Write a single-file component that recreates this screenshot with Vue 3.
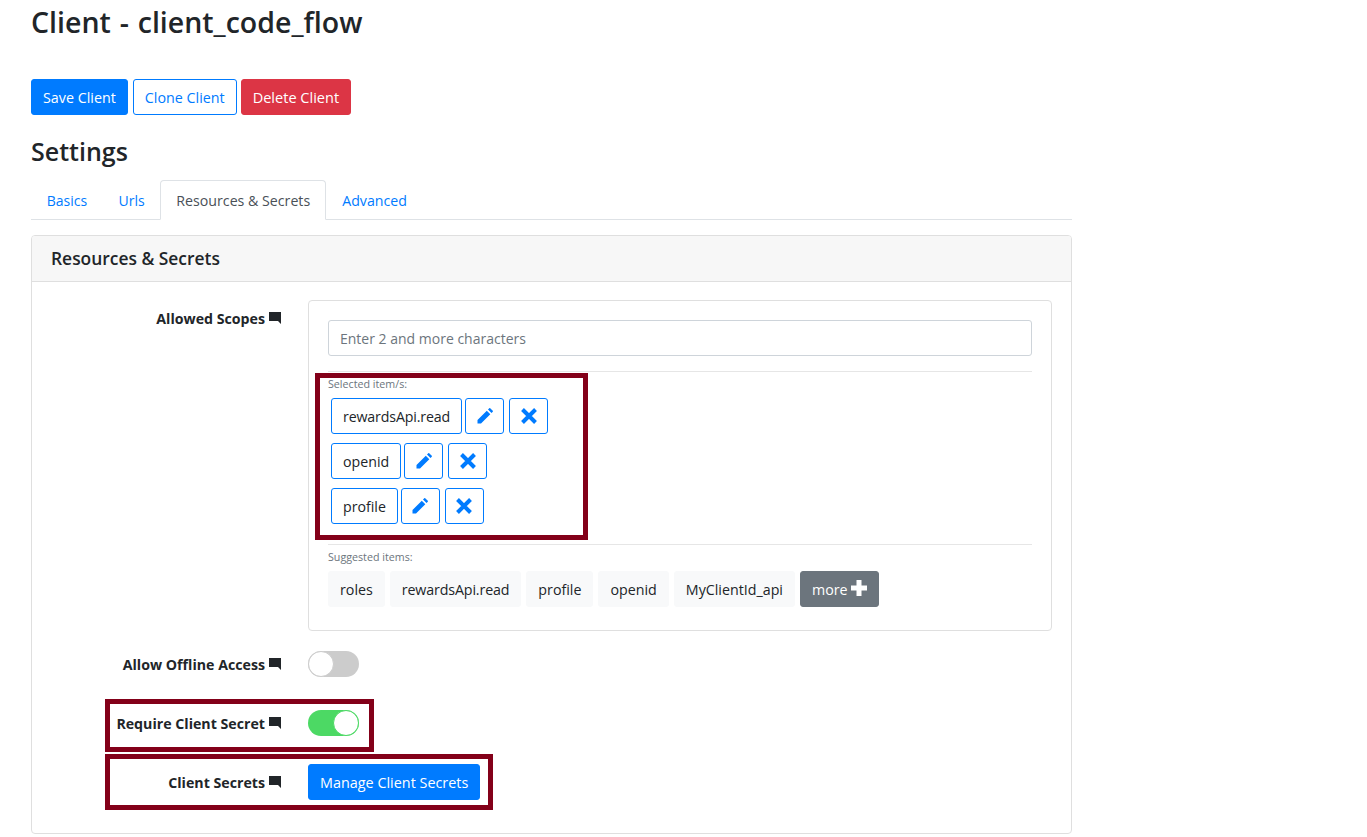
<script setup>
const selected = ['rewardsApi.read', 'openid', 'profile']
const suggested = ['roles', 'rewardsApi.read', 'profile', 'openid', 'MyClientId_api']
const tightIf = (s) => (s === 'rewardsApi.read' ? 'tight' : '')
</script>

<template>
  <div class="page">
    <h1 class="title">Client - client_code_flow</h1>
    <div class="actions">
      <button class="btn primary">Save Client</button>
      <button class="btn outline">Clone Client</button>
      <button class="btn danger">Delete Client</button>
    </div>
    <h3 class="settings">Settings</h3>
    <div class="tabs">
      <a class="tab short">Basics</a>
      <a class="tab short">Urls</a>
      <a class="tab active">Resources &amp; Secrets</a>
      <a class="tab">Advanced</a>
    </div>
    <section class="card">
      <h5 class="card-head">Resources &amp; Secrets</h5>
      <div class="card-body">
        <div class="row scopes">
          <label class="label">Allowed Scopes
            <svg class="cmt" viewBox="0 0 12 12"><path d="M0 0H12V12L9 9H0Z" /></svg>
          </label>
          <div class="box">
            <input class="input" placeholder="Enter 2 and more characters" />
            <div class="sep"></div>
            <div class="selected">
              <div class="mark mark-sel"></div>
              <small class="hint">Selected item/s:</small>
              <div v-for="s in selected" :key="s" class="sel-row">
                <button class="btn outline ink" :class="tightIf(s)">{{ s }}</button>
                <button class="btn outline icon first">
                  <svg viewBox="0 0 16 16" width="16" height="16"><path d="M0.5 15.5V12L9.8 2.7L13.3 6.2L4 15.5ZM11 1.5L12.3 0.2C12.6 0 13 0 13.2 0.2L15.8 2.8C16 3 16 3.4 15.8 3.7L14.5 5Z" /></svg>
                </button>
                <button class="btn outline icon">
                  <svg viewBox="0 0 16 16" width="16" height="16"><path d="M1.5 1.5L14.5 14.5M14.5 1.5L1.5 14.5" class="x" /></svg>
                </button>
              </div>
            </div>
            <div class="sep sep2"></div>
            <small class="hint hint2">Suggested items:</small>
            <div class="sug">
              <button v-for="s in suggested" :key="s" class="btn light" :class="tightIf(s)">{{ s }}</button>
              <button class="btn secondary more">more<svg viewBox="0 0 16 16" width="16" height="16" class="plus"><path d="M5.5 0H10.5V5.5H16V10.5H10.5V16H5.5V10.5H0V5.5H5.5Z" /></svg></button>
            </div>
          </div>
        </div>
        <div class="row r-offline">
          <label class="label">Allow Offline Access
            <svg class="cmt" viewBox="0 0 12 12"><path d="M0 0H12V12L9 9H0Z" /></svg>
          </label>
          <span class="toggle"><span class="knob"></span></span>
        </div>
        <div class="row r-secret">
          <div class="mark mark-req"></div>
          <label class="label">Require Client Secret
            <svg class="cmt" viewBox="0 0 12 12"><path d="M0 0H12V12L9 9H0Z" /></svg>
          </label>
          <span class="toggle on"><span class="knob"></span></span>
        </div>
        <div class="row r-manage">
          <div class="mark mark-man"></div>
          <label class="label">Client Secrets
            <svg class="cmt" viewBox="0 0 12 12"><path d="M0 0H12V12L9 9H0Z" /></svg>
          </label>
          <div class="manage"><button class="btn primary">Manage Client Secrets</button></div>
        </div>
      </div>
    </section>
  </div>
</template>

<style>
html, body { margin: 0; background: #fff; }
</style>

<style scoped>
.page {
  width: 1041px;
  margin-left: 31px;
  font-family: "Open Sans", "Noto Sans", sans-serif;
  font-size: 14.2px;
  color: #212529;
}
.title { margin: 0 0 35px; height: 44px; line-height: 44px; font-size: 28.5px; font-weight: 600; word-spacing: 1.5px; }
.actions { display: flex; gap: 5px; font-size: 14.3px; }
.actions .danger { margin-left: -1px; font-size: 14.55px; }
.btn {
  box-sizing: border-box;
  height: 36px;
  padding: 0 11px;
  font: inherit;
  border: 1px solid transparent;
  border-radius: 3px;
  background: none;
  white-space: nowrap;
}
.primary { background: #007bff; border-color: #007bff; color: #fff; }
.outline { background: #fff; border-color: #007bff; color: #007bff; }
.danger { background: #dc3545; border-color: #dc3545; color: #fff; }
.light { background: #f8f9fa; border-color: #f8f9fa; color: #212529; }
.secondary { background: #6c757d; border-color: #6c757d; color: #fff; }
.ink { color: #212529; }
.tight { letter-spacing: -0.14px; }
.settings { margin: 13px 0 6px; height: 46px; line-height: 46px; font-size: 25px; font-weight: 600; }
.tabs { display: flex; height: 40px; box-sizing: border-box; border-bottom: 1px solid #dee2e6; margin-bottom: 15px; }
.tab { padding: 0 15px; height: 40px; line-height: 39px; box-sizing: border-box; font-size: 14.2px; color: #007bff; border: 1px solid transparent; border-radius: 4px 4px 0 0; }
.tab.short { font-size: 14px; padding: 0 14.7px; }
.tab.active { color: #495057; background: #fff; border-color: #dee2e6 #dee2e6 #fff; }
.card { border: 1px solid #dfdfdf; border-radius: 4px; }
.card-head { margin: 0; height: 46px; line-height: 45px; padding: 0 19px; box-sizing: border-box; background: #f7f7f7; border-bottom: 1px solid #dfdfdf; font-size: 17.4px; font-weight: 600; border-radius: 3px 3px 0 0; }
.card-body { padding: 18px 19px 33px; }
.row { display: grid; grid-template-columns: 230px 1fr; column-gap: 27px; position: relative; }
.label { display: flex; justify-content: flex-end; align-items: center; gap: 4px; font-weight: 700; font-size: 14.2px; height: 26px; white-space: nowrap; }
.scopes { margin-bottom: 20px; }
.scopes .label { margin-top: 5px; }
.r-offline { margin-bottom: 33px; }
.r-secret { margin-bottom: 28px; }
.r-manage .label { height: 36px; }
.manage { font-size: 14.4px; }
.cmt { width: 12px; height: 12px; fill: #212529; flex: none; }
.box { box-sizing: border-box; height: 331px; border: 1px solid #dfdfdf; border-radius: 4px; padding: 19px; }
.input { display: block; box-sizing: border-box; width: 100%; height: 36px; padding: 0 11px; font: inherit; font-size: 14px; border: 1px solid #ced4da; border-radius: 3px; }
.input::placeholder { color: #6c757d; opacity: 1; }
.sep { height: 1px; background: #e6e6e6; margin-top: 15px; }
.sep2 { margin-top: 0; }
.selected { position: relative; height: 172px; }
.hint { display: block; font-size: 10.7px; line-height: 14px; color: #6c757d; padding-top: 5px; }
.hint2 { padding-top: 5px; margin-bottom: 7px; }
.sel-row { display: flex; margin: 7px 0 9px 3px; gap: 5px; }
.sel-row + .sel-row { margin-top: 0; }
.icon { width: 39px; padding: 0; display: flex; align-items: center; justify-content: center; fill: #007bff; }
.icon.first { margin-left: -2px; }
.x { stroke: #007bff; stroke-width: 4; fill: none; }
.sug { display: flex; gap: 5px; font-size: 14.25px; }
.more { display: flex; align-items: center; gap: 3px; }
.plus { fill: #fff; flex: none; margin-top: -3px; }
.toggle { display: block; position: relative; box-sizing: border-box; width: 51px; height: 26px; border-radius: 13px; background: #ccc; }
.knob { position: absolute; left: 0; top: 0; box-sizing: border-box; width: 26px; height: 26px; border-radius: 50%; background: #fff; border: 1px solid #ccc; }
.toggle.on { background: #4cd964; }
.toggle.on .knob { left: 25px; border-color: #4cd964; }
.mark { position: absolute; box-sizing: border-box; border: 5px solid #830019; pointer-events: none; }
.mark-sel { left: -13px; top: 1px; width: 273px; height: 167px; }
.mark-req { left: 54px; top: -11px; width: 269px; height: 53px; }
.mark-man { left: 54px; top: -10px; width: 388px; height: 56px; }
</style>
